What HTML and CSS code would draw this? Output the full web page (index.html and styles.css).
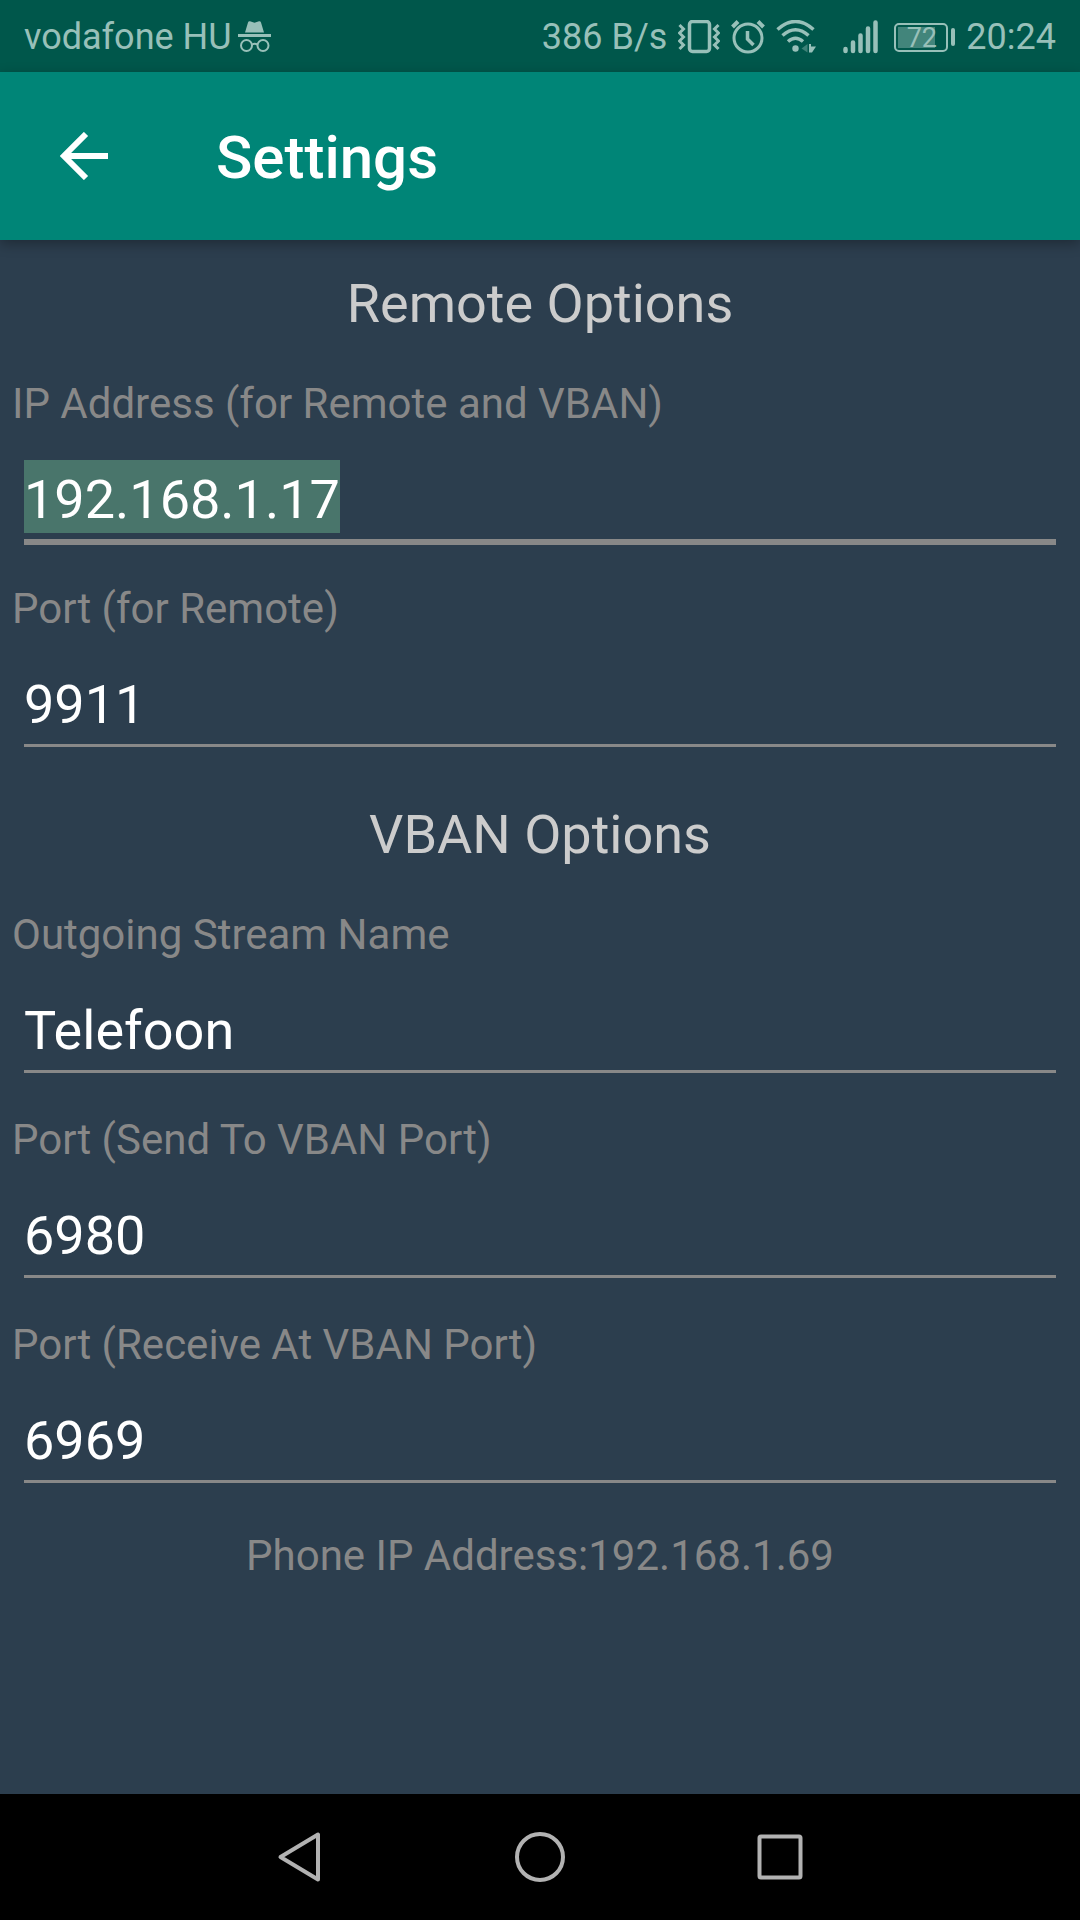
FILE: index.html
```html
<!DOCTYPE html>
<html lang="en">
<head>
<meta charset="utf-8">
<meta name="viewport" content="width=device-width, initial-scale=1">
<title>Settings</title>
<link rel="stylesheet" href="styles.css">
</head>
<body>
<div class="screen">
  <div class="status-bar">
    <div class="carrier">
      <span>vodafone HU</span>
      <svg width="33" height="32" viewBox="0 0 33 32" aria-hidden="true">
        <path d="M7 11.500 10 1.500Q10.500 0 12 0.300L16.500 1.700 21 0.300Q22.500 0 23 1.500L26 11.500Z" fill="currentColor"/>
        <path d="M0 13h33v3H0z" fill="currentColor"/>
        <g fill="none" stroke="currentColor" stroke-width="2"><circle cx="8.500" cy="24.500" r="5.500"/><circle cx="25" cy="24.500" r="5.500"/><path d="M14 23.500q2.700-1.500 5.500 0"/></g>
      </svg>
    </div>
    <div class="indicators">
      <span class="speed">386 B/s</span>
      <svg width="42" height="34" viewBox="0 0 42 34" aria-hidden="true" fill="none" stroke="currentColor" stroke-width="3">
        <rect x="11.500" y="1.500" width="20" height="30" rx="3" stroke-width="3.500"/>
        <path d="m1.500 5 4 4-4 4 4 4-4 4 4 4-4 4M40.500 5l-4 4 4 4-4 4 4 4-4 4 4 4"/>
      </svg>
      <svg width="34" height="34" viewBox="0 0 34 34" aria-hidden="true" fill="none" stroke="currentColor" stroke-width="3">
        <circle cx="17" cy="18" r="14"/><path d="M16.500 11v8l6 6" stroke-width="3.500"/><path d="m1.500 7 5.500-5.500M32.500 7 27 1.500" stroke-width="4"/>
      </svg>
      <svg class="wifi" width="40" height="34" viewBox="0 0 40 34" aria-hidden="true" fill="none" stroke="currentColor" stroke-width="3.500">
        <path d="M1.500 9.500Q19.500-6.500 37.500 9.500M6.500 15.500Q19.500 4 32.500 15.500M12 21.500q7.500-6.500 15 0"/>
        <circle cx="19.500" cy="28.500" r="3.200" fill="currentColor" stroke="none"/>
        <path class="dim" d="M25.500 28.500l6-4.500v8.500z" fill="currentColor" stroke="none"/><path d="M33 24h2v2.500h5l-4 6h-3z" fill="currentColor" stroke="none"/>
      </svg>
      <svg class="signal" width="35" height="34" viewBox="0 0 35 34" aria-hidden="true" stroke="currentColor" stroke-width="4.500" stroke-linecap="round">
        <path d="M2.500 29v2M10 22.500V31M17.500 15.500V31M25 8.500V31M32.500 2.500V31"/>
      </svg>
      <div class="battery">
        <span class="battery-level">72</span>
        <span class="battery-tip"></span>
      </div>
      <time>20:24</time>
    </div>
  </div>

  <header class="app-bar">
    <button class="back" type="button" aria-label="Back">
      <svg width="48" height="48" viewBox="0 0 48 48" fill="none" stroke="currentColor" stroke-width="6" aria-hidden="true"><path d="M48 24H6M26 2 4 24l22 22"/></svg>
    </button>
    <h1>Settings</h1>
  </header>

  <main class="content">
    <form class="settings">
      <section>
        <h2>Remote Options</h2>
        <div class="field"><label for="ip">IP Address (for Remote and VBAN)</label><input id="ip" type="text" value="192.168.1.17" autofocus></div>
        <div class="field"><label for="port">Port (for Remote)</label><input id="port" type="text" value="9911"></div>
      </section>
      <section>
        <h2>VBAN Options</h2>
        <div class="field"><label for="stream">Outgoing Stream Name</label><input id="stream" type="text" value="Telefoon" spellcheck="false"></div>
        <div class="field"><label for="send">Port (Send To VBAN Port)</label><input id="send" type="text" value="6980"></div>
        <div class="field"><label for="receive">Port (Receive At VBAN Port)</label><input id="receive" type="text" value="6969"></div>
      </section>
    </form>
    <p class="phone-ip">Phone IP Address:192.168.1.69</p>
  </main>

  <nav class="nav-bar">
    <button type="button" aria-label="Back"><svg width="50" height="52" viewBox="0 0 50 52" aria-hidden="true"><path d="M43 3.500v45L5.500 26z"/></svg></button>
    <button type="button" aria-label="Home"><svg width="50" height="52" viewBox="0 0 50 52" aria-hidden="true"><circle cx="25" cy="26" r="23"/></svg></button>
    <button type="button" aria-label="Recent apps"><svg width="50" height="52" viewBox="0 0 50 52" aria-hidden="true"><rect x="4.500" y="5.500" width="41" height="41" rx="1.500"/></svg></button>
  </nav>
</div>
<script src="script.js"></script>
</body>
</html>
```
FILE: styles.css
```css
* { box-sizing: border-box; }

body {
  margin: 0;
  background: #2c3e4e;
  font-family: Roboto, "Noto Sans", sans-serif;
}

button {
  padding: 0;
  border: 0;
  background: none;
  color: inherit;
}

svg { display: block; flex: none; }

.screen {
  display: flex;
  flex-direction: column;
  min-height: 100vh;
}

.status-bar {
  display: flex;
  justify-content: space-between;
  align-items: center;
  height: 72px;
  padding: 2px 24px 0;
  background: #00574b;
  color: #98c0b9;
  font-size: 36px;
}

.carrier, .indicators {
  display: flex;
  align-items: center;
}

.carrier { gap: 6px; }
.indicators { gap: 11px; }
.wifi .dim { opacity: 0.4; }
.signal { margin-left: 16px; }

.battery {
  display: flex;
  align-items: center;
  gap: 3px;
  margin-left: 5px;
}

.battery-level {
  width: 54px;
  height: 29px;
  border: 2px solid currentColor;
  border-radius: 5px;
  padding-left: 1px;
  background: linear-gradient(#42857b, #42857b) 2px 2px / 37px 21px no-repeat;
  font-size: 27px;
  line-height: 26px;
  text-align: center;
}

.battery-tip {
  width: 4px;
  height: 18px;
  border-radius: 2px;
  background: currentColor;
}

.app-bar {
  display: flex;
  align-items: center;
  height: 168px;
  background: #008577;
  color: #fff;
  box-shadow: 0 4px 12px rgba(0, 0, 0, 0.3);
}

.back {
  display: grid;
  place-items: center;
  width: 168px;
  height: 168px;
}

h1 {
  margin: 0;
  padding: 4px 0 0 48px;
  font-size: 60px;
  font-weight: 500;
  line-height: 72px;
}

.content { flex: 1; }

h2 {
  margin: 0;
  padding: 28px 12px 21px;
  color: #ccc;
  font-size: 54px;
  font-weight: 400;
  line-height: 72px;
  text-align: center;
}

.field {
  display: flex;
  flex-direction: column;
  height: 205px;
  padding: 19px 24px 0 12px;
}

label, .phone-ip {
  color: #888;
  font-size: 42px;
  line-height: 48px;
}

.field input {
  height: 114px;
  margin-left: 12px;
  padding: 35px 0 3px;
  border: 0;
  border-bottom: 3px solid #888;
  border-radius: 0;
  outline: 0;
  background: none;
  color: #fff;
  font: 54px/73px Roboto, "Noto Sans", sans-serif;
}

.field input:focus {
  height: 117px;
  border-bottom-width: 6px;
  background: linear-gradient(#49756b, #49756b) 0 32px / 316px 73px no-repeat;
}

.field input::selection {
  background: #49756b;
  color: #fff;
}

.phone-ip {
  margin: 25px 12px;
  text-align: center;
}

.nav-bar {
  display: flex;
  justify-content: center;
  height: 126px;
  background: #000;
  color: #b2b2b2;
}

.nav-bar button {
  display: grid;
  place-items: center;
  width: 240px;
}

.nav-bar svg {
  fill: none;
  stroke: currentColor;
  stroke-width: 4;
  stroke-linejoin: round;
}
```
FILE: script.js
```js
const address = document.getElementById("ip");
address.focus();
address.select();
```
